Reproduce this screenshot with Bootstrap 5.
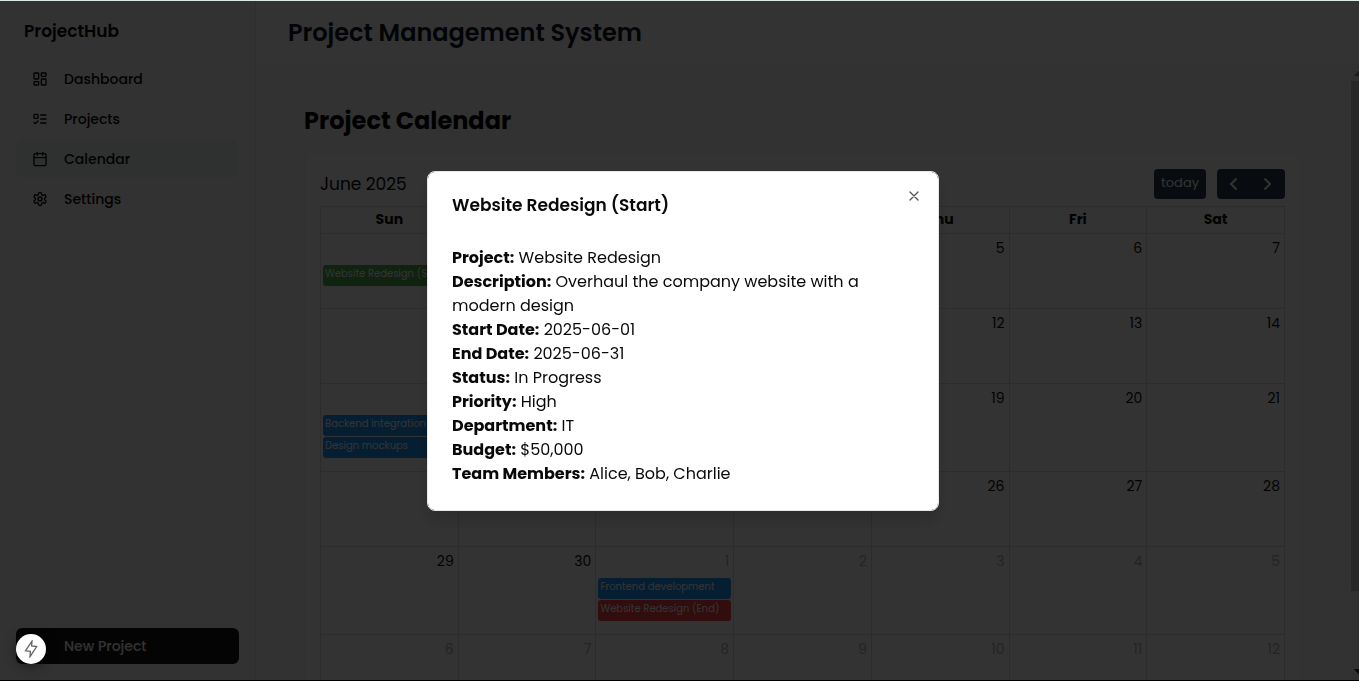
<!DOCTYPE html>
<html lang="en">
<head>
<meta charset="utf-8">
<meta name="viewport" content="width=device-width, initial-scale=1">
<title>ProjectHub</title>
<link href="https://cdn.jsdelivr.net/npm/bootstrap@5.3.0/dist/css/bootstrap.min.css" rel="stylesheet">
<style>
  body { font-family: Poppins, Inter, "Open Sans", sans-serif; color: #09090b; line-height: 24px; border-top: 1px solid #dfe7e5; border-bottom: 1px solid #000; }
  svg { fill: none; stroke: currentColor; stroke-width: 2; stroke-linecap: round; stroke-linejoin: round; flex: none; }

  .sidebar { width: 256px; flex: none; border-right: 1px solid #e8ecec; background: #fafafa; }
  .brand { font-size: 17px; font-weight: 600; line-height: 28px; color: #09090b; }
  .side-link { height: 36px; padding: 0 16px; gap: 16px; border-radius: 6px; font-size: 14px; font-weight: 500; color: #09090b; text-decoration: none; }
  .side-link.active { background: #e9f1ee; }
  .new-btn { height: 36px; border: 0; border-radius: 6px; background: #18181b; color: #fafafa; font-size: 14px; font-weight: 500; }

  .topbar { height: 64px; flex: none; padding: 0 32px; border-bottom: 1px solid #f3f4f6; background: #fdfdfd; }
  .topbar h1 { font-size: 24px; font-weight: 600; line-height: 32px; color: #0f172a; }
  .scroll-pane { min-height: 0; }
  .pane-body { background: #fafafa; padding: 40px 50px 40px 48px; }
  .pane-body h2 { font-size: 24px; font-weight: 700; line-height: 32px; margin-bottom: 16px; }
  .cal-card { background: #fdfdfd; border: 1px solid #f3f5f5; border-radius: 8px; padding: 15px 15px 24px; }
  .cal-title { font-size: 17px; font-weight: 400; }
  .cal-tools { gap: 11px; }
  .cal-btn { height: 30px; border: 0; border-radius: 4px; background: #2c3e50; color: #fff; font-size: 13px; line-height: 20px; padding: 0 7px 2px; }
  .cal-btn.arrow { width: 34px; padding: 0; }

  .cal { table-layout: fixed; width: 100%; border-collapse: collapse; margin-top: 7px; }
  .cal th, .cal td { border: 1px solid #ddd; padding: 0; vertical-align: top; }
  .cal th { height: 27px; text-align: center; font-size: 14px; font-weight: 700; line-height: 24px; }
  .cal td { height: 75px; }
  .day { display: block; text-align: right; padding: 2px 4px 5px; font-size: 14px; font-weight: 400; line-height: 24px; }
  .other { color: #b3b3b3; }
  .ev { display: block; height: 21px; margin: 0 2px 1px; padding: 0 2px; border-radius: 3px; background: #2196f3; color: #fff; font-size: 10px; font-weight: 400; line-height: 17px; white-space: nowrap; overflow: hidden; text-decoration: none; }
  .ev-start { background: #4caf50; }
  .ev-end { background: #f44040; }
  .cal .ev-pair { padding-bottom: 12px; }

  .bar-track { width: 8px; flex: none; background: #f3f3f3; overflow: hidden; }
  .bar-track svg { fill: #8b8b8b; stroke: none; }
  .bar-track .bar-down { fill: #333; }
  .bar-thumb { flex: 7 0 0; background: #c1c1c1; }
  .bar-rest { flex: 1 0 0; }

  .veil { position: fixed; inset: 1px 0 0; background: rgba(0, 0, 0, .8); z-index: 1040; }
  .modal { padding-left: 7px; pointer-events: none; }
  .modal-dialog { --bs-modal-width: 512px; }
  .modal-content { border: 1px solid #e4e9e8; border-radius: 8px; padding: 23px 24px 24px; box-shadow: 0 10px 15px rgba(0, 0, 0, .15); }
  .modal-title { font-size: 17px; font-weight: 600; line-height: 20px; }
  .close-btn { position: absolute; top: 16px; right: 16px; border: 0; background: none; padding: 0; color: #555; line-height: 16px; }
  .details { font-size: 16px; line-height: 24px; margin-top: 31px; }
  .details dt { font-weight: 700; display: inline; }
  .details dd { display: inline; margin: 0; }

  .quick { position: fixed; left: 16px; bottom: 17px; z-index: 1060; width: 30px; height: 30px; border: 0; border-radius: 50%; background: #fff; color: #666; padding: 0; box-shadow: 0 2px 12px rgba(0, 0, 0, .5); }
  .quick svg { stroke-width: 1.3; stroke-linejoin: miter; }
</style>
</head>
<body class="d-flex vh-100 overflow-hidden">

<aside class="sidebar d-flex flex-column p-3">
  <div class="brand px-2 mb-3">ProjectHub</div>
  <nav class="d-flex flex-column gap-1">
    <a class="side-link d-flex align-items-center" href="#"><svg width="16" height="16" viewBox="0 0 24 24"><rect x="3" y="3" width="7" height="9" rx="1"/><rect x="14" y="3" width="7" height="5" rx="1"/><rect x="14" y="12" width="7" height="9" rx="1"/><rect x="3" y="16" width="7" height="5" rx="1"/></svg>Dashboard</a>
    <a class="side-link d-flex align-items-center" href="#"><svg width="16" height="16" viewBox="0 0 24 24"><rect x="3" y="5" width="6" height="6" rx="1"/><path d="m3 17 2 2 4-4M13 6h8M13 12h8M13 18h8"/></svg>Projects</a>
    <a class="side-link active d-flex align-items-center" href="#" aria-current="page"><svg width="16" height="16" viewBox="0 0 24 24"><path d="M8 2v4M16 2v4M3 10h18"/><rect x="3" y="4" width="18" height="18" rx="2"/></svg>Calendar</a>
    <a class="side-link d-flex align-items-center" href="#"><svg width="16" height="16" viewBox="0 0 24 24"><path d="M12.22 2h-.44a2 2 0 0 0-2 2v.18a2 2 0 0 1-1 1.73l-.43.25a2 2 0 0 1-2 0l-.15-.08a2 2 0 0 0-2.73.73l-.22.38a2 2 0 0 0 .73 2.73l.15.1a2 2 0 0 1 1 1.72v.51a2 2 0 0 1-1 1.74l-.15.09a2 2 0 0 0-.73 2.73l.22.38a2 2 0 0 0 2.73.73l.15-.08a2 2 0 0 1 2 0l.43.25a2 2 0 0 1 1 1.73V20a2 2 0 0 0 2 2h.44a2 2 0 0 0 2-2v-.18a2 2 0 0 1 1-1.73l.43-.25a2 2 0 0 1 2 0l.15.08a2 2 0 0 0 2.73-.73l.22-.39a2 2 0 0 0-.73-2.73l-.15-.08a2 2 0 0 1-1-1.74v-.5a2 2 0 0 1 1-1.74l.15-.09a2 2 0 0 0 .73-2.73l-.22-.38a2 2 0 0 0-2.73-.73l-.15.08a2 2 0 0 1-2 0l-.43-.25a2 2 0 0 1-1-1.73V4a2 2 0 0 0-2-2z"/><circle cx="12" cy="12" r="3"/></svg>Settings</a>
  </nav>
  <button class="new-btn mt-auto w-100 text-start ps-5" type="button">New Project</button>
</aside>

<div class="d-flex flex-column flex-grow-1">
  <header class="topbar d-flex align-items-center"><h1 class="m-0">Project Management System</h1></header>
  <div class="scroll-pane d-flex flex-grow-1">
    <main class="pane-body flex-grow-1 overflow-hidden">
      <h2>Project Calendar</h2>
      <section class="cal-card">
        <div class="d-flex align-items-center justify-content-between">
          <div class="cal-title">June 2025</div>
          <div class="cal-tools d-flex">
            <button class="cal-btn" type="button">today</button>
            <div class="btn-group">
              <button class="cal-btn arrow rounded-end-0" type="button" aria-label="Previous month"><svg width="16" height="16" viewBox="0 0 16 16"><path d="M10.500 2.500 5 8l5.500 5.500" stroke-linecap="butt" stroke-linejoin="miter"/></svg></button>
              <button class="cal-btn arrow rounded-start-0" type="button" aria-label="Next month"><svg width="16" height="16" viewBox="0 0 16 16"><path d="M4.500 2.500 10 8l-5.500 5.500" stroke-linecap="butt" stroke-linejoin="miter"/></svg></button>
            </div>
          </div>
        </div>
        <table class="cal">
          <thead><tr><th>Sun</th><th>Mon</th><th>Tue</th><th>Wed</th><th>Thu</th><th>Fri</th><th>Sat</th></tr></thead>
          <tbody>
            <tr><td><span class="day">1</span><a class="ev ev-start" href="#">Website Redesign (Start)</a></td><td><span class="day">2</span></td><td><span class="day">3</span></td><td><span class="day">4</span></td><td><span class="day">5</span></td><td><span class="day">6</span></td><td><span class="day">7</span></td></tr>
            <tr><td><span class="day">8</span></td><td><span class="day">9</span></td><td><span class="day">10</span></td><td><span class="day">11</span></td><td><span class="day">12</span></td><td><span class="day">13</span></td><td><span class="day">14</span></td></tr>
            <tr><td class="ev-pair"><span class="day">15</span><a class="ev" href="#">Backend integration</a><a class="ev" href="#">Design mockups</a></td><td><span class="day">16</span></td><td><span class="day">17</span></td><td><span class="day">18</span></td><td><span class="day">19</span></td><td><span class="day">20</span></td><td><span class="day">21</span></td></tr>
            <tr><td><span class="day">22</span></td><td><span class="day">23</span></td><td><span class="day">24</span></td><td><span class="day">25</span></td><td><span class="day">26</span></td><td><span class="day">27</span></td><td><span class="day">28</span></td></tr>
            <tr><td><span class="day">29</span></td><td><span class="day">30</span></td><td class="ev-pair"><span class="day other">1</span><a class="ev" href="#">Frontend development</a><a class="ev ev-end" href="#">Website Redesign (End)</a></td><td><span class="day other">2</span></td><td><span class="day other">3</span></td><td><span class="day other">4</span></td><td><span class="day other">5</span></td></tr>
            <tr><td><span class="day other">6</span></td><td><span class="day other">7</span></td><td><span class="day other">8</span></td><td><span class="day other">9</span></td><td><span class="day other">10</span></td><td><span class="day other">11</span></td><td><span class="day other">12</span></td></tr>
          </tbody>
        </table>
      </section>
    </main>
    <div class="bar-track d-flex flex-column" aria-hidden="true">
      <svg width="15" height="16" viewBox="0 0 15 16"><path d="M3 11h9L7.500 6z"/></svg>
      <div class="bar-thumb"></div>
      <div class="bar-rest"></div>
      <svg class="bar-down" width="15" height="16" viewBox="0 0 15 16"><path d="M3 5h9L7.500 10z"/></svg>
    </div>
  </div>
</div>

<div class="veil"></div>
<div class="modal d-block" role="dialog" aria-modal="true" aria-labelledby="evTitle">
  <div class="modal-dialog modal-dialog-centered">
    <div class="modal-content">
      <h2 class="modal-title" id="evTitle">Website Redesign (Start)</h2>
      <dl class="details mb-0">
        <div><dt>Project:</dt> <dd>Website Redesign</dd></div>
        <div><dt>Description:</dt> <dd>Overhaul the company website with a modern design</dd></div>
        <div><dt>Start Date:</dt> <dd>2025-06-01</dd></div>
        <div><dt>End Date:</dt> <dd>2025-06-31</dd></div>
        <div><dt>Status:</dt> <dd>In Progress</dd></div>
        <div><dt>Priority:</dt> <dd>High</dd></div>
        <div><dt>Department:</dt> <dd>IT</dd></div>
        <div><dt>Budget:</dt> <dd>$50,000</dd></div>
        <div><dt>Team Members:</dt> <dd>Alice, Bob, Charlie</dd></div>
      </dl>
      <button class="close-btn" type="button" aria-label="Close"><svg width="16" height="16" viewBox="0 0 24 24"><path d="M18 6 6 18M6 6l12 12"/></svg></button>
    </div>
  </div>
</div>
<button class="quick d-flex align-items-center justify-content-center" type="button" aria-label="Quick actions"><svg width="18" height="18" viewBox="0 0 18 18"><path d="M10 1.200 3.500 10.800 8.400 11.300 8 16.700 14.700 6.500 9.600 6z"/></svg></button>

<script src="https://cdn.jsdelivr.net/npm/bootstrap@5.3.0/dist/js/bootstrap.bundle.min.js"></script>
</body>
</html>
